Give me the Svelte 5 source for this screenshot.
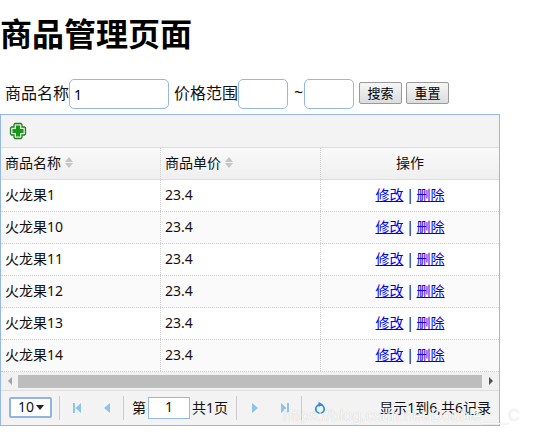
<script>
	const rows = ['火龙果1', '火龙果10', '火龙果11', '火龙果12', '火龙果13', '火龙果14'];
</script>

<h1>商品管理页面</h1>

<form class="search">
	<label for="name">商品名称</label>
	<input id="name" class="name" value="1" />
	<label for="min" class="price">价格范围</label>
	<input id="min" class="num" />
	<span class="tilde">~</span>
	<input class="num" />
	<button type="button" class="first">搜索</button>
	<button type="button">重置</button>
</form>

<div class="grid">
	<div class="toolbar">
		<svg width="18" height="18" viewBox="0 0 18 18">
			<path
				d="M6 1.500h6l1 1V5h2.500l1 1v6l-1 1H13v2.500l-1 1H6l-1-1V13H2.500l-1-1V6l1-1H5V2.500z"
				fill="#dff0dc"
				stroke="#2a7a2a"
				stroke-width="1.300"
			/>
			<path d="M7 3.500h4V7h3.500v4H11v3.500H7V11H3.500V7H7z" fill="#169a16" />
		</svg>
	</div>

	<div class="row head">
		<div class="cell">
			商品名称
			<span class="sort"></span>
		</div>
		<div class="cell">
			商品单价
			<span class="sort"></span>
		</div>
		<div class="cell center">操作</div>
	</div>

	{#each rows as name, i}
		<div class="row" class:alt={i % 2 === 1}>
			<div class="cell">{name}</div>
			<div class="cell">23.4</div>
			<div class="cell center">
				<span class="links"><a href="#edit">修改</a> | <a href="#del">删除</a></span>
			</div>
		</div>
	{/each}

	<div class="scrollbar">
		<span class="arrow left"></span>
		<div class="thumb"></div>
		<span class="arrow right"></span>
	</div>

	<div class="pager">
		<div class="size">
			<span>10</span>
			<i></i>
		</div>
		<b class="sep"></b>
		<div class="btns">
			<svg width="8" height="12" viewBox="0 0 8 12"><path d="M0 1h2v10H0zM8 1v10L2.500 6z" fill="#8cc4ec" /></svg>
			<svg width="8" height="12" viewBox="0 0 8 12"><path d="M7 1v10L1 6z" fill="#8cc4ec" /></svg>
		</div>
		<b class="sep"></b>
		<span class="page">第</span>
		<span class="pnum">1</span>
		<span class="total">共1页</span>
		<b class="sep"></b>
		<div class="btns next">
			<svg width="8" height="12" viewBox="0 0 8 12"><path d="M1 1v10l6-5z" fill="#8cc4ec" /></svg>
			<svg width="8" height="12" viewBox="0 0 8 12"><path d="M0 1v10l5.500-5zM6 1h2v10H6z" fill="#8cc4ec" /></svg>
		</div>
		<b class="sep"></b>
		<svg class="reload" width="12" height="14" viewBox="0 0 12 14">
			<circle cx="6" cy="8" r="4.200" fill="none" stroke="#2f8fd8" stroke-width="1.800" />
			<path d="M4.500 .8L9 3.500 4.500 6z" fill="#2f8fd8" />
		</svg>
		<span class="info">显示1到6,共6记录</span>
	</div>
</div>

<div class="watermark">https://blog.csdn.net/Double___C</div>

<style>
	:global(body) {
		font-family: 'Noto Sans', 'Noto Sans CJK SC', sans-serif;
		color: #111;
		background: #fff;
	}

	h1 {
		margin: 0;
		padding-top: 12px;
		height: 79px;
		box-sizing: border-box;
		font-size: 32px;
		line-height: 44px;
		font-weight: 700;
		color: #000;
	}

	.search {
		display: flex;
		align-items: center;
		height: 30px;
		padding-left: 5px;
		margin-bottom: 5px;
		font-size: 16px;
	}

	.search label,
	.tilde {
		padding-bottom: 5px;
	}

	.search input {
		box-sizing: border-box;
		height: 30px;
		padding: 0 4px;
		border: 1px solid #95b8e7;
		border-radius: 5px;
		font: 14px 'Noto Sans', sans-serif;
		outline: none;
	}

	.name {
		width: 100px;
	}

	.price {
		margin-left: 5px;
		width: 64px;
		white-space: nowrap;
	}

	.num {
		width: 50px;
	}

	.tilde {
		width: 16px;
		padding-left: 6px;
		box-sizing: border-box;
	}

	.search button {
		box-sizing: border-box;
		width: 43px;
		height: 22px;
		margin: 0 0 2px 4px;
		padding: 0 0 2px;
		border: 1px solid #999;
		border-radius: 2px;
		background: linear-gradient(#f6f6f6, #dcdcdc);
		font: 13px 'Noto Sans CJK SC', sans-serif;
		color: #000;
	}

	.search .first {
		margin-left: 5px;
	}

	.grid {
		box-sizing: border-box;
		width: 500px;
		border: 1px solid #95b8e7;
		font-size: 14px;
	}

	.toolbar {
		display: flex;
		align-items: center;
		height: 33px;
		padding-left: 8px;
		background: #f3f3f3;
		border-bottom: 1px solid #ddd;
		box-sizing: border-box;
	}

	.row {
		display: grid;
		grid-template-columns: 160px 160px 178px;
		height: 32px;
		box-sizing: border-box;
		border-bottom: 1px dotted #ccc;
	}

	.row.alt {
		background: #fafafa;
	}

	.head {
		background: linear-gradient(#f9f9f9, #efefef);
		border-bottom: 1px solid #ddd;
	}

	.cell {
		display: flex;
		align-items: center;
		gap: 4px;
		padding: 0 0 3px 4px;
		border-right: 1px dotted #ccc;
		color: #111;
	}

	.cell:last-child {
		border-right: 0;
	}

	.center {
		justify-content: center;
		padding-left: 0;
		gap: 0;
	}

	.links {
		white-space: pre;
		word-spacing: -1px;
	}

	.sort {
		display: inline-block;
		width: 8px;
		height: 11px;
		position: relative;
	}

	.sort::before,
	.sort::after {
		content: '';
		position: absolute;
		left: 0;
		border-left: 4px solid transparent;
		border-right: 4px solid transparent;
	}

	.sort::before {
		top: 0;
		border-bottom: 5px solid #c4c4c4;
	}

	.sort::after {
		bottom: 0;
		border-top: 5px solid #c4c4c4;
	}

	a {
		color: #00e;
	}

	.scrollbar {
		display: flex;
		align-items: center;
		height: 19px;
		background: #f1f1f1;
		border-bottom: 1px solid #ddd;
		box-sizing: border-box;
	}

	.thumb {
		flex: 1;
		height: 13px;
		background: #bdbdbd;
	}

	.arrow {
		width: 17px;
		display: flex;
		justify-content: center;
	}

	.arrow::before {
		content: '';
		border-top: 4px solid transparent;
		border-bottom: 4px solid transparent;
	}

	.arrow.left::before {
		border-right: 4px solid #a3a3a3;
	}

	.arrow.right::before {
		border-left: 4px solid #505050;
	}

	.pager {
		display: flex;
		align-items: center;
		height: 34px;
		padding-left: 8px;
		background: #f3f3f3;
	}

	.size {
		box-sizing: border-box;
		display: flex;
		align-items: center;
		justify-content: space-between;
		width: 43px;
		height: 21px;
		margin-bottom: 2px;
		padding: 0 6px 2px 7px;
		background: #fff;
		border: 2px solid #8eb4e8;
		border-radius: 2px;
	}

	.size i {
		border-left: 4px solid transparent;
		border-right: 4px solid transparent;
		border-top: 5px solid #222;
		margin-top: 2px;
	}

	.sep {
		width: 1px;
		height: 24px;
		background: #ccc;
	}

	.size + .sep {
		margin-left: 7px;
	}

	.btns {
		display: flex;
		gap: 22px;
		padding: 0 12px 0 13px;
	}

	.btns.next {
		padding-left: 14px;
	}

	.page {
		margin-left: 8px;
		padding-bottom: 2px;
	}

	.pnum {
		box-sizing: border-box;
		width: 42px;
		height: 22px;
		margin: 0 2px;
		line-height: 18px;
		text-align: center;
		background: #fff;
		border: 1px solid #95b8e7;
	}

	.total {
		margin-right: 8px;
		padding-bottom: 2px;
	}

	.reload {
		margin-left: 12px;
	}

	.info {
		margin-left: auto;
		padding: 0 8px 2px 0;
		color: #111;
	}

	.watermark {
		position: absolute;
		left: 283px;
		top: 407px;
		font: 16px 'Liberation Sans', sans-serif;
		color: rgba(255, 255, 255, 0.85);
		text-shadow: 0 0 1px rgba(0, 0, 0, 0.2);
		white-space: nowrap;
		pointer-events: none;
	}
</style>
